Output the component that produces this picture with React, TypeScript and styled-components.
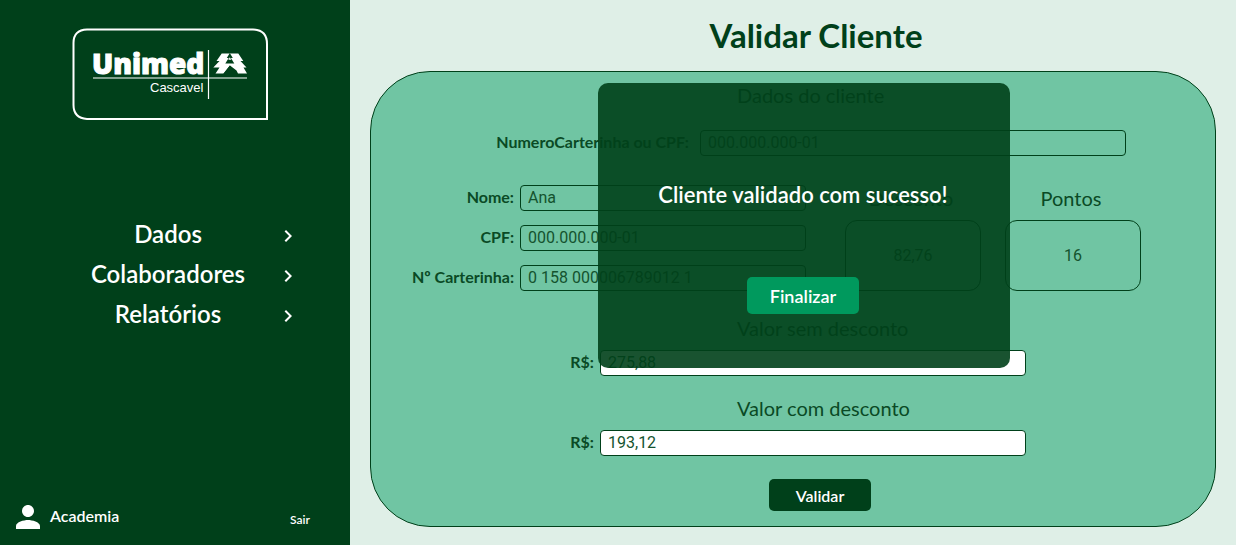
import React from "react";
import styled, { createGlobalStyle } from "styled-components";
import { MdChevronRight, MdPerson } from "react-icons/md";

const GlobalStyle = createGlobalStyle`
  *, *::before, *::after { box-sizing: border-box; }
  body {
    margin: 0;
    background: #dfefe7;
    color: #00401a;
    font-family: Lato, sans-serif;
  }
  button, input { font: inherit; color: inherit; }
  h1, h2, p { margin: 0; }
`;

const Page = styled.div`
  display: flex;
  min-height: 100vh;
`;

const Sidebar = styled.aside`
  display: flex;
  flex-direction: column;
  flex: 0 0 350px;
  background: #00401a;
  color: #fff;
`;

const Logo = styled.svg`
  margin: 28px 0 0 72px;
`;

const Menu = styled.nav`
  display: flex;
  flex-direction: column;
  margin: 93px 50px 0 60px;
`;

const MenuItem = styled.a`
  display: flex;
  align-items: center;
  height: 40px;
  color: inherit;
  font-size: 24px;
  font-weight: 600;
  line-height: 40px;
  text-decoration: none;

  span {
    flex: 1;
    text-align: center;
  }
  svg {
    margin-top: 3px;
  }
`;

const UserBar = styled.div`
  display: flex;
  align-items: center;
  gap: 4px;
  margin-top: auto;
  padding: 0 40px 10px 10px;
`;

const UserName = styled.span`
  flex: 1;
  padding-bottom: 4px;
  font-size: 16px;
  font-weight: 600;
`;

const Logout = styled.a`
  padding-top: 5px;
  color: inherit;
  font-size: 12px;
  font-weight: 600;
  text-decoration: none;
`;

const Main = styled.main`
  flex: 1;
  min-width: 0;
  padding: 15px 20px;
`;

const Title = styled.h1`
  padding-left: 46px;
  font-size: 33px;
  font-weight: 700;
  line-height: 40px;
  text-align: center;
`;

const Card = styled.section`
  position: relative;
  margin-top: 16px;
  padding: 11px 74px 15px 39px;
  border: 1px solid #00401a;
  border-radius: 60px;
  background: #70c5a3;
`;

const SectionTitle = styled.h2`
  padding-left: 327px;
  color: #0a4a25;
  font-size: 20px;
  font-weight: 400;
  line-height: 24px;
`;

const Field = styled.div<{ $labelWidth: number }>`
  display: grid;
  grid-template-columns: ${(p) => p.$labelWidth}px 1fr;
  align-items: center;
  column-gap: 6px;
`;

const Label = styled.label`
  padding-bottom: 2px;
  color: #0a4a25;
  font-size: 16px;
  font-weight: 700;
  line-height: 24px;
  text-align: right;
  white-space: nowrap;
`;

const TextInput = styled.input<{ $filled?: boolean }>`
  width: 100%;
  min-width: 0;
  height: 26px;
  padding: 0 7px 2px;
  border: 1px solid #00401a;
  border-radius: 4px;
  background: ${(p) => (p.$filled ? "#fff" : "transparent")};
  color: #14532e;
  font-family: Roboto, sans-serif;
  font-size: 16px;
  outline: none;
`;

const SearchRow = styled.div`
  margin: 23px 15px 29px 85px;

  ${Field} {
    column-gap: 11px;
  }
`;

const ClientRow = styled.div`
  display: flex;
  align-items: flex-end;
  gap: 39px;
`;

const ClientFields = styled.div`
  display: flex;
  flex: 1;
  flex-direction: column;
  gap: 14px;
`;

const Stats = styled.div`
  display: flex;
  gap: 24px;
`;

const Stat = styled.div`
  display: flex;
  flex-direction: column;
  gap: 10px;
  width: 136px;
  text-align: center;
`;

const StatLabel = styled.label`
  padding-right: 4px;
  color: #0a4a25;
  font-size: 20px;
  line-height: 24px;
`;

const StatValue = styled.input`
  width: 100%;
  height: 71px;
  border: 1px solid #00401a;
  border-radius: 12px;
  background: transparent;
  color: #14532e;
  font-family: Roboto, sans-serif;
  font-size: 16px;
  text-align: center;
  outline: none;
`;

const Amount = styled.div<{ $gap: number }>`
  display: flex;
  flex-direction: column;
  gap: 10px;
  margin-top: ${(p) => p.$gap}px;

  ${Field} {
    margin: 0 115px 0 150px;
  }
`;

const Button = styled.button<{ $accent?: boolean }>`
  width: ${(p) => (p.$accent ? "112px" : "102px")};
  height: ${(p) => (p.$accent ? "37px" : "32px")};
  padding: 0;
  border: 0;
  border-radius: 5px;
  background: ${(p) => (p.$accent ? "#00995d" : "#00401a")};
  color: #fff;
  font-size: ${(p) => (p.$accent ? "18px" : "16px")};
  font-weight: 600;
  cursor: pointer;
`;

const Actions = styled.div`
  padding: 23px 0 0 359px;
`;

const Modal = styled.div`
  position: absolute;
  top: 11px;
  left: calc(50% - 195px);
  display: flex;
  flex-direction: column;
  align-items: center;
  gap: 68px;
  width: 412px;
  padding: 98px 2px 54px 0;
  border-radius: 10px;
  background: rgba(0, 64, 26, 0.9);
  color: #fff;
`;

const ModalText = styled.p`
  font-size: 22px;
  font-weight: 600;
  line-height: 28px;
`;

const menu = ["Dados", "Colaboradores", "Relatórios"];

const clientFields = [
  { id: "nome", label: "Nome:", value: "Ana" },
  { id: "cpf", label: "CPF:", value: "000.000.000-01" },
  { id: "carteirinha", label: "Nº Carterinha:", value: "0 158 000006789012 1" },
];

const stats = [
  { id: "desconto", label: "Desconto", value: "82,76" },
  { id: "pontos", label: "Pontos", value: "16" },
];

const amounts = [
  { id: "bruto", title: "Valor sem desconto", value: "275,88", gap: 25 },
  { id: "liquido", title: "Valor com desconto", value: "193,12", gap: 20 },
];

function UnimedLogo() {
  return (
    <Logo width="197" height="93" viewBox="0 0 197 93" role="img" aria-label="Unimed Cascavel">
      <path
        d="M15 1.500H181Q195 2 195 16V91H15Q1.500 90 1.500 77V15Q1.500 2 15 1.500Z"
        fill="none"
        stroke="#fff"
        strokeWidth="2"
      />
      <text
        x="20"
        y="46"
        fill="#fff"
        stroke="#fff"
        strokeWidth="1"
        fontFamily="Open Sans, sans-serif"
        fontSize="28"
        fontWeight="800"
      >
        Unimed
      </text>
      <text x="78" y="64" fill="#fff" fontFamily="Liberation Sans, sans-serif" fontSize="13">
        Cascavel
      </text>
      <path d="M21 50H175M136.500 22V71" fill="none" stroke="#fff" strokeWidth="1.200" />
      <path
        fill="#fff"
        d="M149.700 25.500H166.300L171.300 33H168.500L174.500 39.500H171.500L175 45.500H166L164.500 42.500L158 37.500L151.500 45.500H143.500L147.500 39.500H141.300L147.500 33H144.500Z"
      />
      <path
        fill="#00401a"
        d="M157.800 25L160.800 30H158.900L162.300 35.500H153.300L156.700 30H154.800ZM157.800 37.500L164.300 46H151.300Z"
      />
      <path fill="#fff" d="M157.800 29.300L159.300 31.800H156.300Z" />
    </Logo>
  );
}

export default function App() {
  return (
    <>
      <GlobalStyle />
      <Page>
        <Sidebar>
          <UnimedLogo />
          <Menu>
            {menu.map((item) => (
              <MenuItem key={item} href="#">
                <span>{item}</span>
                <MdChevronRight size={24} />
              </MenuItem>
            ))}
          </Menu>
          <UserBar>
            <MdPerson size={36} />
            <UserName>Academia</UserName>
            <Logout href="#">Sair</Logout>
          </UserBar>
        </Sidebar>

        <Main>
          <Title>Validar Cliente</Title>
          <Card>
            <SectionTitle>Dados do cliente</SectionTitle>
            <SearchRow>
              <Field $labelWidth={194}>
                <Label htmlFor="busca">NumeroCarterinha ou CPF:</Label>
                <TextInput id="busca" defaultValue="000.000.000-01" />
              </Field>
            </SearchRow>

            <ClientRow>
              <ClientFields>
                {clientFields.map((f) => (
                  <Field key={f.id} $labelWidth={104}>
                    <Label htmlFor={f.id}>{f.label}</Label>
                    <TextInput id={f.id} defaultValue={f.value} readOnly />
                  </Field>
                ))}
              </ClientFields>
              <Stats>
                {stats.map((s) => (
                  <Stat key={s.id}>
                    <StatLabel htmlFor={s.id}>{s.label}</StatLabel>
                    <StatValue id={s.id} defaultValue={s.value} readOnly />
                  </Stat>
                ))}
              </Stats>
            </ClientRow>

            {amounts.map((a) => (
              <Amount key={a.id} $gap={a.gap}>
                <SectionTitle>{a.title}</SectionTitle>
                <Field $labelWidth={34}>
                  <Label htmlFor={a.id}>R$:</Label>
                  <TextInput id={a.id} defaultValue={a.value} $filled />
                </Field>
              </Amount>
            ))}

            <Actions>
              <Button type="button">Validar</Button>
            </Actions>

            <Modal role="dialog" aria-label="Cliente validado">
              <ModalText>Cliente validado com sucesso!</ModalText>
              <Button type="button" $accent>
                Finalizar
              </Button>
            </Modal>
          </Card>
        </Main>
      </Page>
    </>
  );
}
